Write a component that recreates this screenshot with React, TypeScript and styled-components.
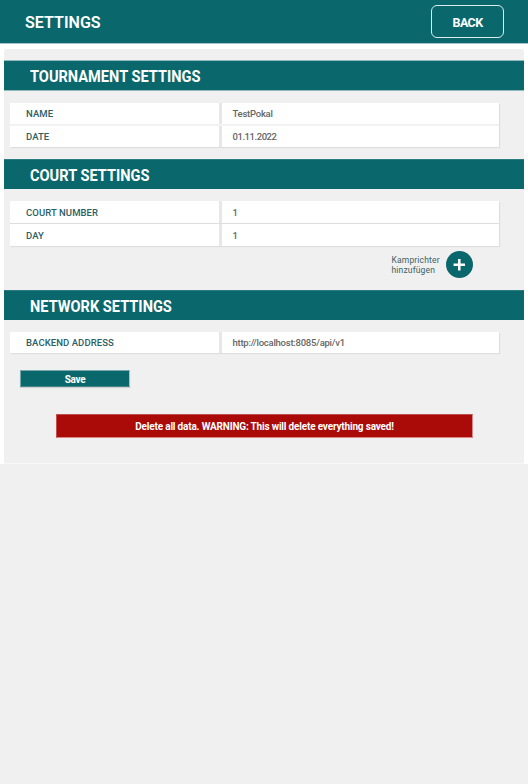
import React from "react";
import styled, { createGlobalStyle } from "styled-components";

const TEAL = "#0a686c";

const GlobalStyle = createGlobalStyle`
  * { box-sizing: border-box; }
  body {
    margin: 0;
    background: #f0f0f0;
    font-family: Roboto, "Liberation Sans", sans-serif;
  }
  button { font-family: inherit; padding: 0; cursor: pointer; }
`;

const Page = styled.div`
  height: 464px;
  background: #fff;
`;

const Header = styled.header`
  height: 44px;
  padding: 0 24px 0 25px;
  display: flex;
  align-items: flex-start;
  justify-content: space-between;
  background: ${TEAL};
  border-bottom: 1px solid #a4c5c8;
`;

const PageTitle = styled.h1`
  margin: 0;
  color: #fff;
  font-size: 17px;
  font-weight: 600;
  line-height: 45px;
  transform: scaleX(0.945);
  transform-origin: left;
`;

const BackButton = styled.button`
  width: 73px;
  height: 33px;
  margin-top: 5px;
  border: 1px solid #dcebec;
  border-radius: 6px;
  background: transparent;
  color: #fff;
  font-size: 12.5px;
  font-weight: 700;
  letter-spacing: -0.6px;
  line-height: 34px;
`;

const Panel = styled.main`
  height: 415px;
  margin: 5px 4px 0;
  padding-top: 11px;
  display: flex;
  flex-direction: column;
  background: #f0f0f0;
  border-bottom: 1px solid #f7f7f7;
  border-radius: 2px 2px 0 0;
`;

const SectionTitle = styled.h2<{ $first?: boolean }>`
  flex: none;
  height: ${(p) => (p.$first ? 31 : 30)}px;
  margin: ${(p) => (p.$first ? 0 : 12)}px 0 0;
  padding: ${(p) => (p.$first ? 2 : 3)}px 0 0 26px;
  display: flex;
  align-items: center;
  background: ${TEAL};
  border-top: 1px solid ${(p) => (p.$first ? "#8fb9bb" : "#2b7c80")};
  border-bottom: 1px solid ${(p) => (p.$first ? "#8fb9bb" : TEAL)};
  color: #fff;
  font-size: 16.5px;
  font-weight: 700;
  line-height: 20px;
`;

const TitleText = styled.span`
  transform: scaleX(0.884);
  transform-origin: left;
`;

const Table = styled.div<{ $divider: string; $gap: number }>`
  width: 489px;
  margin: 12px 0 0 6px;
  display: flex;
  flex-direction: column;
  gap: ${(p) => p.$gap}px;
  background: ${(p) => p.$divider};
  box-shadow: 1px 1px 1px #dedede;
`;

const Row = styled.div<{ $height: number }>`
  height: ${(p) => p.$height}px;
  display: grid;
  grid-template-columns: 209px 277px;
  gap: 3px;
  background: #e7e7e7;
`;

const Cell = styled.div`
  padding: 0 0 0 16px;
  display: flex;
  align-items: center;
  background: #fff;
  color: #2b6064;
  font-size: 9.5px;
  font-weight: 500;
  letter-spacing: 0.08px;
  white-space: nowrap;
`;

const Value = styled(Cell)<{ $tight?: boolean }>`
  padding-left: 10.5px;
  color: #666;
  letter-spacing: ${(p) => (p.$tight ? -0.45 : -0.25)}px;
`;

const AddRow = styled.div`
  height: 27px;
  margin: 5px 51px 0 0;
  display: flex;
  align-items: center;
  justify-content: flex-end;
  gap: 5px;
`;

const AddLabel = styled.span`
  width: 49px;
  color: #3c6265;
  font-size: 8.5px;
  line-height: 10px;
  letter-spacing: 0.16px;
  white-space: pre-line;
`;

const AddButton = styled.button`
  width: 27.5px;
  height: 27.5px;
  display: flex;
  border: 0;
  border-radius: 50%;
  background: ${TEAL};
`;

const SaveButton = styled.button`
  width: 110px;
  height: 17px;
  flex: none;
  margin: 17px 0 0 16px;
  border: 1px solid #78a8ab;
  border-right-color: #a6c5c7;
  border-bottom-color: #47878a;
  background: ${TEAL};
  box-shadow: 0 1px 1px #d0d0d0;
  color: #fff;
  font-size: 10px;
  font-weight: 700;
  line-height: 18px;
  letter-spacing: -0.3px;
`;

const DeleteButton = styled.button`
  width: 417px;
  height: 24px;
  flex: none;
  margin: 27px 0 0 52px;
  border: 1px solid #c14e4e;
  border-right-color: #d88a8a;
  border-bottom-color: #db8484;
  background: #aa0a08;
  color: #fff;
  font-size: 10px;
  font-weight: 700;
  line-height: 24px;
  letter-spacing: -0.18px;
`;

export default function App() {
  return (
    <>
      <GlobalStyle />
      <Page>
        <Header>
          <PageTitle>SETTINGS</PageTitle>
          <BackButton>BACK</BackButton>
        </Header>
        <Panel>
          <SectionTitle $first>
            <TitleText>TOURNAMENT SETTINGS</TitleText>
          </SectionTitle>
          <Table $gap={2} $divider="#f2f2f2">
            <Row $height={21}>
              <Cell>NAME</Cell>
              <Value>TestPokal</Value>
            </Row>
            <Row $height={21}>
              <Cell>DATE</Cell>
              <Value $tight>01.11.2022</Value>
            </Row>
          </Table>

          <SectionTitle>
            <TitleText>COURT SETTINGS</TitleText>
          </SectionTitle>
          <Table $gap={1} $divider="#dedede">
            <Row $height={22}>
              <Cell>COURT NUMBER</Cell>
              <Value>1</Value>
            </Row>
            <Row $height={22}>
              <Cell>DAY</Cell>
              <Value>1</Value>
            </Row>
          </Table>
          <AddRow>
            <AddLabel>{"Kamprichter\nhinzufügen"}</AddLabel>
            <AddButton aria-label="Kamprichter hinzufügen">
              <svg width="27.5" height="27.5" viewBox="0 0 28 28">
                <path d="M13.5 8.2v11.6M7.7 14h11.6" stroke="#fff" strokeWidth="2.6" />
              </svg>
            </AddButton>
          </AddRow>

          <SectionTitle>
            <TitleText>NETWORK SETTINGS</TitleText>
          </SectionTitle>
          <Table $gap={0} $divider="#dedede">
            <Row $height={21}>
              <Cell>BACKEND ADDRESS</Cell>
              <Value>http://localhost:8085/api/v1</Value>
            </Row>
          </Table>
          <SaveButton>Save</SaveButton>
          <DeleteButton>Delete all data. WARNING: This will delete everything saved!</DeleteButton>
        </Panel>
      </Page>
    </>
  );
}
